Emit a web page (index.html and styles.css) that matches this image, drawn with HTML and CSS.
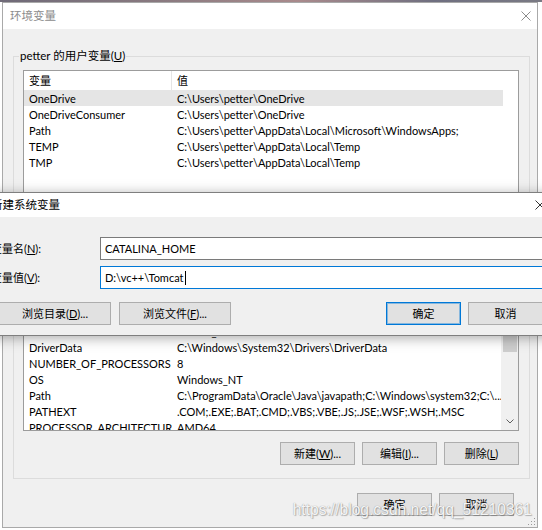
FILE: index.html
```html
<!DOCTYPE html>
<html lang="zh-CN">
<head>
<meta charset="utf-8">
<title>环境变量</title>
<link rel="stylesheet" href="styles.css">
</head>
<body>
<div class="desk-strip"></div>
<div class="window">
  <div class="titlebar">
    <span class="title inactive">环境变量</span>
    <svg class="close" viewBox="0 0 10 10" width="10" height="10"><path d="M0.5 0.5 L9.5 9.5 M9.5 0.5 L0.5 9.5" stroke="#8c8c8c" stroke-width="1" fill="none"/></svg>
  </div>
  <div class="win-body">
    <fieldset class="group">
      <legend>petter 的用户变量(<u>U</u>)</legend>
      <div class="list list-user">
        <div class="rows">
          <div class="row header"><span class="c1">变量</span><span class="c2">值</span></div>
          <div class="row selected"><span class="c1">OneDrive</span><span class="c2">C:\Users\petter\OneDrive</span></div>
          <div class="row"><span class="c1">OneDriveConsumer</span><span class="c2">C:\Users\petter\OneDrive</span></div>
          <div class="row"><span class="c1">Path</span><span class="c2">C:\Users\petter\AppData\Local\Microsoft\WindowsApps;</span></div>
          <div class="row"><span class="c1">TEMP</span><span class="c2">C:\Users\petter\AppData\Local\Temp</span></div>
          <div class="row"><span class="c1">TMP</span><span class="c2">C:\Users\petter\AppData\Local\Temp</span></div>
        </div>
      </div>
      <div class="btn-row">
        <button class="btn">新建(<u>N</u>)...</button>
        <button class="btn">编辑(<u>E</u>)...</button>
        <button class="btn">删除(<u>D</u>)</button>
      </div>
    </fieldset>
    <fieldset class="group group-sys">
      <legend>系统变量(<u>S</u>)</legend>
      <div class="list list-sys">
        <div class="rows">
          <div class="row header"><span class="c1">变量</span><span class="c2">值</span></div>
          <div class="row"><span class="c1">ComSpec</span><span class="c2">C:\Windows\system32\cmd.exe</span></div>
          <div class="row"><span class="c1">CLASSPATH</span><span class="c2">%JAVA_HOME%\lib</span></div>
          <div class="row"><span class="c1">DriverData</span><span class="c2">C:\Windows\System32\Drivers\DriverData</span></div>
          <div class="row"><span class="c1">NUMBER_OF_PROCESSORS</span><span class="c2">8</span></div>
          <div class="row"><span class="c1">OS</span><span class="c2">Windows_NT</span></div>
          <div class="row"><span class="c1">Path</span><span class="c2">C:\ProgramData\Oracle\Java\javapath;C:\Windows\system32;C:\...</span></div>
          <div class="row"><span class="c1">PATHEXT</span><span class="c2">.COM;.EXE;.BAT;.CMD;.VBS;.VBE;.JS;.JSE;.WSF;.WSH;.MSC</span></div>
          <div class="row"><span class="c1">PROCESSOR_ARCHITECTURE</span><span class="c2">AMD64</span></div>
        </div>
        <div class="scrollbar">
          <div class="sb-btn"></div>
          <div class="sb-thumb"></div>
          <div class="sb-track"></div>
          <div class="sb-btn sb-down">
            <svg viewBox="0 0 8 5" width="8" height="5"><path d="M0.5 0.5 L4 4 L7.5 0.5" stroke="#606060" stroke-width="1" fill="none"/></svg>
          </div>
        </div>
      </div>
      <div class="btn-row">
        <button class="btn">新建(<u>W</u>)...</button>
        <button class="btn">编辑(<u>I</u>)...</button>
        <button class="btn">删除(<u>L</u>)</button>
      </div>
    </fieldset>
    <div class="btn-row actions">
      <button class="btn">确定</button>
      <button class="btn">取消</button>
    </div>
  </div>
  <svg class="grip" viewBox="0 0 8 8" width="8" height="8">
    <rect x="6" y="0" width="1" height="1" fill="#9a9a9a"/>
    <rect x="3" y="3" width="1" height="1" fill="#9a9a9a"/>
    <rect x="6" y="3" width="1" height="1" fill="#9a9a9a"/>
    <rect x="0" y="6" width="1" height="1" fill="#9a9a9a"/>
    <rect x="3" y="6" width="1" height="1" fill="#9a9a9a"/>
    <rect x="6" y="6" width="1" height="1" fill="#9a9a9a"/>
  </svg>
  <div class="watermark">https://blog.csdn.net/qq_51210361</div>
</div>

<div class="dialog">
  <div class="d-title">
    <span class="title">新建系统变量</span>
    <svg class="d-close" viewBox="0 0 10 10" width="10" height="10"><path d="M0.5 0.5 L9.5 9.5 M9.5 0.5 L0.5 9.5" stroke="#333" stroke-width="1" fill="none"/></svg>
  </div>
  <div class="d-body">
    <div class="d-grid">
      <span class="d-label">变量名(<u>N</u>):</span>
      <div class="field">CATALINA_HOME</div>
      <span class="d-label">变量值(<u>V</u>):</span>
      <div class="field focus">D:\vc++\Tomcat<span class="caret"></span></div>
    </div>
    <div class="d-buttons">
      <button class="btn wide">浏览目录(<u>D</u>)...</button>
      <button class="btn wide">浏览文件(<u>F</u>)...</button>
      <button class="btn default">确定</button>
      <button class="btn">取消</button>
    </div>
  </div>
</div>
</body>
</html>
```
FILE: styles.css
```css
html, body {
  margin: 0;
  padding: 0;
  overflow: hidden;
  background: #ffffff;
}
body {
  position: relative;
  width: 542px;
  height: 530px;
  font-family: Lato, "Noto Sans CJK SC", sans-serif;
  font-size: 11px;
  color: #000;
}
u { text-decoration: underline; text-underline-offset: 1px; }

.desk-strip {
  height: 2px;
  background: linear-gradient(90deg, #6f6a78, #8a7a80 30%, #a98a8c 55%, #6f6f80 80%, #7a7a84);
}

.window {
  position: relative;
  margin-left: 2px;
  width: 536px;
  height: 526px;
  box-sizing: border-box;
  border: 1px solid #a9a9a9;
  background: #f0f0f0;
  display: flex;
  flex-direction: column;
}
.titlebar {
  height: 26px;
  flex: none;
  background: #fff;
  display: flex;
  align-items: center;
  padding-left: 7px;
  padding-right: 6px;
}
.title { line-height: 16px; font-size: 11.5px; }
.title.inactive { color: #8c8c8c; }
.close { margin-left: auto; }

.win-body {
  padding: 19px 7px 10px 10px;
  display: flex;
  flex-direction: column;
}
.group {
  margin: 0;
  padding: 6px 10px 13px 9px;
  border: 1px solid #dcdcdc;
  min-width: 0;
}
.group + .group { margin-top: 8px; }
.group-sys { padding-top: 5px; }
.group legend {
  padding: 0 1px;
  margin-left: -4px;
  line-height: 16px;
  font-size: 11.5px;
}

.list {
  box-sizing: border-box;
  border: 1px solid #9c9c9c;
  background: #fff;
  overflow: hidden;
  display: flex;
}
.list-user { height: 142px; }
.list-sys { height: 144px; }
.rows { flex: none; width: 479px; }
.list-sys .rows { width: 477px; }
.row {
  display: grid;
  grid-template-columns: 148px 1fr;
  height: 16px;
  line-height: 17px;
  white-space: nowrap;
}
.row span { padding-left: 5px; overflow: hidden; }
.row.header { height: 19px; line-height: 19px; }
.row.header .c1 { border-right: 1px solid #e5e5e5; }
.row.selected { background: #e5e5e5; }

.scrollbar {
  flex: none;
  width: 17px;
  background: #f0f0f0;
  display: flex;
  flex-direction: column;
}
.sb-btn { height: 17px; flex: none; display: flex; align-items: center; justify-content: center; }
.sb-thumb { height: 47px; flex: none; margin: 0 1px 0 2px; background: #cdcdcd; }
.sb-track { flex: 1; }

.btn-row {
  display: flex;
  justify-content: flex-end;
  gap: 7px;
  margin-top: 9px;
}
.list-sys + .btn-row { margin-top: 11px; }
.actions { margin-top: 14px; padding-right: 16px; }
.btn {
  width: 75px;
  height: 23px;
  box-sizing: border-box;
  border: 1px solid #adadad;
  background: #e1e1e1;
  font: inherit;
  color: #000;
  padding: 0;
  line-height: 21px;
}
.btn.wide { width: 112px; }
.btn.default { border-color: #0078d7; box-shadow: inset 0 0 0 1px rgba(0, 120, 215, 0.4); }

.grip { position: absolute; right: 1px; bottom: 1px; }
.watermark {
  position: absolute;
  right: 5px;
  top: 498px;
  font-family: "Liberation Sans", Arial, sans-serif;
  font-size: 15.6px;
  line-height: 18px;
  color: rgba(255, 255, 255, 0.92);
  text-shadow: 0 0 1px #8a8a8a, 1px 1px 1px rgba(0, 0, 0, 0.25);
  white-space: nowrap;
}

.dialog {
  position: absolute;
  top: 192px;
  left: -18px;
  width: 581px;
  box-sizing: border-box;
  border: 1px solid #7f7f7f;
  background: #f0f0f0;
  box-shadow: 0 2px 12px rgba(0, 0, 0, 0.34);
}
.d-title {
  height: 24px;
  background: #fff;
  display: flex;
  align-items: center;
  padding-left: 8px;
}
.d-close { margin-left: auto; margin-right: 17px; }
.d-body { padding: 20px 19px 10px 8px; }
.d-grid {
  display: grid;
  grid-template-columns: 109px 1fr;
  row-gap: 6px;
  align-items: center;
}
.d-label { line-height: 16px; }
.field {
  height: 23px;
  box-sizing: border-box;
  border: 1px solid #7a7a7a;
  background: #fff;
  padding: 0 4px;
  line-height: 21px;
  white-space: nowrap;
}
.field.focus { border-color: #0078d7; }
.caret {
  display: inline-block;
  width: 1px;
  height: 14px;
  background: #000;
  vertical-align: -3px;
  margin-left: 1px;
}
.d-buttons {
  display: flex;
  margin-top: 13px;
  padding-left: 8px;
  gap: 8px;
}
.d-buttons .default { margin-left: auto; }
.d-buttons .default + .btn { margin-left: -1px; }
```
